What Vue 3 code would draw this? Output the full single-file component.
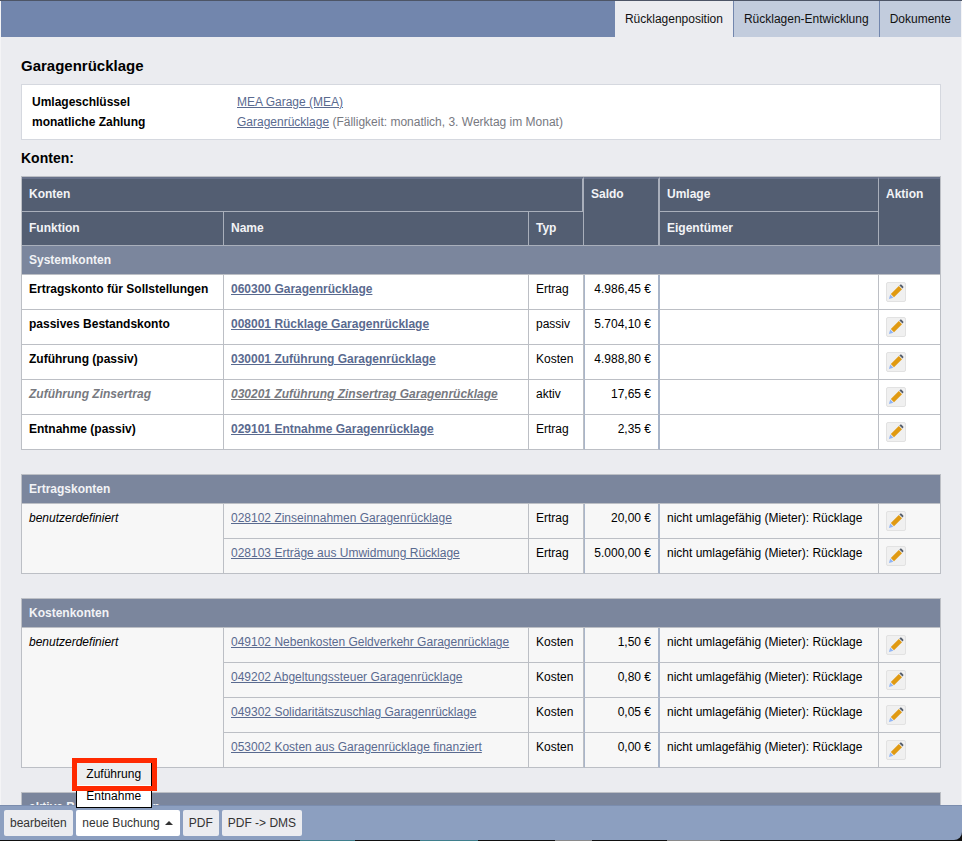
<template>
  <div class="window">
    <nav class="tabbar">
      <div
        v-for="(tab, i) in tabs"
        :key="tab"
        class="tab"
        :class="{ active: i === 0 }"
      >
        {{ tab }}
      </div>
    </nav>

    <main class="content">
      <h2 class="title">Garagenrücklage</h2>
      <div class="info-box">
        <div class="info-row">
          <span class="info-label">Umlageschlüssel</span>
          <span><a class="plain-link">MEA Garage (MEA)</a></span>
        </div>
        <div class="info-row">
          <span class="info-label">monatliche Zahlung</span>
          <span class="muted"><a class="plain-link">Garagenrücklage</a> (Fälligkeit: monatlich, 3. Werktag im Monat)</span>
        </div>
      </div>
      <h3 class="subtitle">Konten:</h3>

      <table v-for="group in groups" :key="group.name" class="accounts">
        <colgroup>
          <col class="c-fn" />
          <col class="c-name" />
          <col class="c-type" />
          <col class="c-saldo" />
          <col class="c-umlage" />
          <col class="c-action" />
        </colgroup>
        <thead v-if="group.head">
          <tr>
            <th colspan="3" class="wide-head">Konten</th>
            <th rowspan="2" class="saldo-head">Saldo</th>
            <th>Umlage</th>
            <th rowspan="2" class="last-head">Aktion</th>
          </tr>
          <tr>
            <th>Funktion</th>
            <th>Name</th>
            <th>Typ</th>
            <th>Eigentümer</th>
          </tr>
        </thead>
        <tbody :class="{ white: group.head }">
          <tr>
            <td colspan="6" class="section">{{ group.name }}</td>
          </tr>
          <tr v-for="(row, i) in group.rows" :key="row.name" :class="{ disabled: row.disabled }">
            <td v-if="row.fn" class="fn">{{ row.fn }}</td>
            <td v-else-if="i === 0" class="custom" :rowspan="group.rows.length">benutzerdefiniert</td>
            <td :class="{ strong: group.head }"><a class="plain-link">{{ row.name }}</a></td>
            <td>{{ row.type }}</td>
            <td class="saldo">{{ row.saldo }}</td>
            <td>{{ row.umlage }}</td>
            <td class="action">
              <button class="edit" type="button" aria-label="bearbeiten">
                <svg viewBox="0 0 16 16" width="16" height="16">
                  <path d="M1 15 L2.2 10.6 L5.4 13.8 Z" fill="#8fb4f5" />
                  <path d="M2.8 10 L10.8 2 L14 5.2 L6 13.2 Z" fill="#e09a12" />
                  <path d="M11.4 1.4 L12.4 0.6 Q13 0.2 13.6 0.8 L15.2 2.4 Q15.8 3 15.3 3.6 L14.6 4.6 Z" fill="#565e6c" />
                </svg>
              </button>
            </td>
          </tr>
        </tbody>
      </table>
    </main>

    <div class="footer-shell">
      <footer class="footer">
        <button class="foot-btn" type="button">bearbeiten</button>
        <div class="menu-wrap">
          <div class="menu">
            <div class="menu-item hover">Zuführung</div>
            <div class="menu-item">Entnahme</div>
          </div>
          <div class="marker"></div>
          <button class="foot-btn open" type="button">neue Buchung <span class="caret"></span></button>
        </div>
        <button class="foot-btn" type="button">PDF</button>
        <button class="foot-btn" type="button">PDF -&gt; DMS</button>
      </footer>
      <div class="desktop-edge"></div>
    </div>
  </div>
</template>

<script setup>
const tabs = ['Rücklagenposition', 'Rücklagen-Entwicklung', 'Dokumente']
const umlage = 'nicht umlagefähig (Mieter): Rücklage'

const groups = [
  {
    name: 'Systemkonten',
    head: true,
    rows: [
      { fn: 'Ertragskonto für Sollstellungen', name: '060300 Garagenrücklage', type: 'Ertrag', saldo: '4.986,45 €', umlage: '' },
      { fn: 'passives Bestandskonto', name: '008001 Rücklage Garagenrücklage', type: 'passiv', saldo: '5.704,10 €', umlage: '' },
      { fn: 'Zuführung (passiv)', name: '030001 Zuführung Garagenrücklage', type: 'Kosten', saldo: '4.988,80 €', umlage: '' },
      { fn: 'Zuführung Zinsertrag', name: '030201 Zuführung Zinsertrag Garagenrücklage', type: 'aktiv', saldo: '17,65 €', umlage: '', disabled: true },
      { fn: 'Entnahme (passiv)', name: '029101 Entnahme Garagenrücklage', type: 'Ertrag', saldo: '2,35 €', umlage: '' },
    ],
  },
  {
    name: 'Ertragskonten',
    rows: [
      { name: '028102 Zinseinnahmen Garagenrücklage', type: 'Ertrag', saldo: '20,00 €', umlage },
      { name: '028103 Erträge aus Umwidmung Rücklage', type: 'Ertrag', saldo: '5.000,00 €', umlage },
    ],
  },
  {
    name: 'Kostenkonten',
    rows: [
      { name: '049102 Nebenkosten Geldverkehr Garagenrücklage', type: 'Kosten', saldo: '1,50 €', umlage },
      { name: '049202 Abgeltungssteuer Garagenrücklage', type: 'Kosten', saldo: '0,80 €', umlage },
      { name: '049302 Solidaritätszuschlag Garagenrücklage', type: 'Kosten', saldo: '0,05 €', umlage },
      { name: '053002 Kosten aus Garagenrücklage finanziert', type: 'Kosten', saldo: '0,00 €', umlage },
    ],
  },
  {
    name: 'aktive Bestandskonten',
    rows: [],
  },
]
</script>

<style>
html,
body {
  margin: 0;
  background: #fff;
}
</style>

<style scoped>
.window {
  display: flex;
  flex-direction: column;
  width: 962px;
  height: 841px;
  overflow: hidden;
  box-sizing: border-box;
  padding: 0 1px;
  border-top: 1px solid #4d5566;
  font-family: "Liberation Sans", Arial, sans-serif;
  font-size: 12px;
  color: #000;
  background: #f4f4f6;
}

.tabbar {
  display: flex;
  flex: none;
  justify-content: flex-end;
  height: 36px;
  background: #7286ad;
}

.tab {
  padding: 11px 10px 0;
  box-sizing: border-box;
  background: #c2ccdd;
  border-left: 1px solid #7286ad;
  color: #111;
}

.tab.active {
  width: 118px;
  background: #ebecf0;
  border-left: 0;
}

.content {
  flex: 1;
  min-height: 0;
  overflow: hidden;
  padding: 0 20px;
  background: #ebecf0;
}

.title {
  margin: 20px 0 10px;
  font-size: 15px;
  line-height: 17px;
  font-weight: bold;
}

.info-box {
  box-sizing: border-box;
  width: 920px;
  height: 56px;
  padding: 7px 10px;
  background: #fff;
  border: 1px solid #d5d8df;
}

.info-row {
  display: flex;
  height: 20px;
  line-height: 20px;
}

.info-label {
  width: 205px;
  font-weight: bold;
}

.muted {
  color: #77797f;
}

.plain-link {
  color: #5a6a8f;
  text-decoration: underline;
}

.subtitle {
  margin: 10px 0 9px;
  font-size: 14px;
  line-height: 17px;
}

.accounts {
  width: 920px;
  margin-bottom: 24px;
  table-layout: fixed;
  border-collapse: separate;
  border-spacing: 0;
  border: 1px solid #bcbfc5;
  border-bottom: 0;
}

.c-fn { width: 202px; }
.c-name { width: 305px; }
.c-type { width: 55px; }
.c-saldo { width: 76px; }
.c-umlage { width: 219px; }
.c-action { width: 61px; }

th {
  box-sizing: border-box;
  height: 34px;
  padding: 9px 7px 0;
  vertical-align: top;
  text-align: left;
  color: #f2f3f6;
  background: #535e72;
  border-right: 1px solid #a9afbb;
  border-bottom: 1px solid #a9afbb;
}

thead tr:first-child th {
  height: 35px;
  padding-top: 8px;
  border-top: 2px solid #68728a;
}

th.last-head {
  border-right: 0;
}

.saldo-head,
.wide-head {
  border-right-width: 2px;
}

td {
  box-sizing: border-box;
  height: 35px;
  padding: 7px 7px 0;
  vertical-align: top;
  line-height: 14px;
  background: #f7f7f7;
  border-right: 1px solid #bcbfc5;
  border-bottom: 1px solid #bcbfc5;
}

.white td {
  background: #fff;
}

tr td:last-child {
  border-right: 0;
}

td.section {
  height: 29px;
  padding-top: 7px;
  font-weight: bold;
  color: #f2f3f6;
  background: #7b869d;
  border-right: 0;
}

.fn,
.strong {
  font-weight: bold;
}

.custom {
  font-style: italic;
}

.disabled .fn,
.disabled .strong {
  font-style: italic;
  color: #77797f;
}

.disabled .strong .plain-link {
  color: #77797f;
}

.saldo {
  text-align: right;
  border-left: 1px solid #a9b5c9;
  border-right: 2px solid #a9b5c9;
}

.action {
  padding-top: 7px;
}

.edit {
  display: flex;
  align-items: center;
  justify-content: center;
  box-sizing: border-box;
  width: 20px;
  height: 20px;
  padding: 0;
  border: 1px solid #e2e2e2;
  border-radius: 2px;
  background: #f0f0f0;
}

.footer-shell {
  flex: none;
  margin: 0 -1px;
  position: relative;
  background: #111;
}

.footer {
  display: flex;
  gap: 3px;
  height: 35px;
  box-sizing: border-box;
  padding: 4px 4px 0;
  background: #8c9fc0;
  border-top: 1px solid #7b8dae;
  border-bottom-right-radius: 8px;
}

.desktop-edge {
  height: 1px;
  background: linear-gradient(
    to right,
    #111 300px,
    #3f7f8c 300px 355px,
    #111 355px 420px,
    #3f7f8c 420px 478px,
    #111 478px 555px,
    #8a8a8a 555px 592px,
    #111 592px 667px,
    #8a8a8a 667px 720px,
    #111 720px
  );
}

.foot-btn {
  height: 26px;
  padding: 0 6px;
  border: 0;
  border-radius: 2px;
  background: #ebecf0;
  font: 12px "Liberation Sans", Arial, sans-serif;
  color: #333;
}

.foot-btn.open {
  width: 104px;
  background: #fff;
}

.caret {
  display: inline-block;
  margin: 0 0 2px 2px;
  border-left: 4px solid transparent;
  border-right: 4px solid transparent;
  border-bottom: 4px solid #333;
}

.menu-wrap {
  position: relative;
}

.menu {
  position: absolute;
  left: 0;
  bottom: 32px;
  width: 76px;
  box-sizing: border-box;
  background: #fff;
  border: 1px solid #000;
}

.menu-item {
  height: 22px;
  line-height: 22px;
  text-align: center;
}

.menu-item.hover {
  background: #eee;
}

.marker {
  position: absolute;
  left: -4px;
  bottom: 49px;
  width: 85px;
  height: 33px;
  box-sizing: border-box;
  border: 5px solid #ff2a00;
  z-index: 1;
}
</style>
